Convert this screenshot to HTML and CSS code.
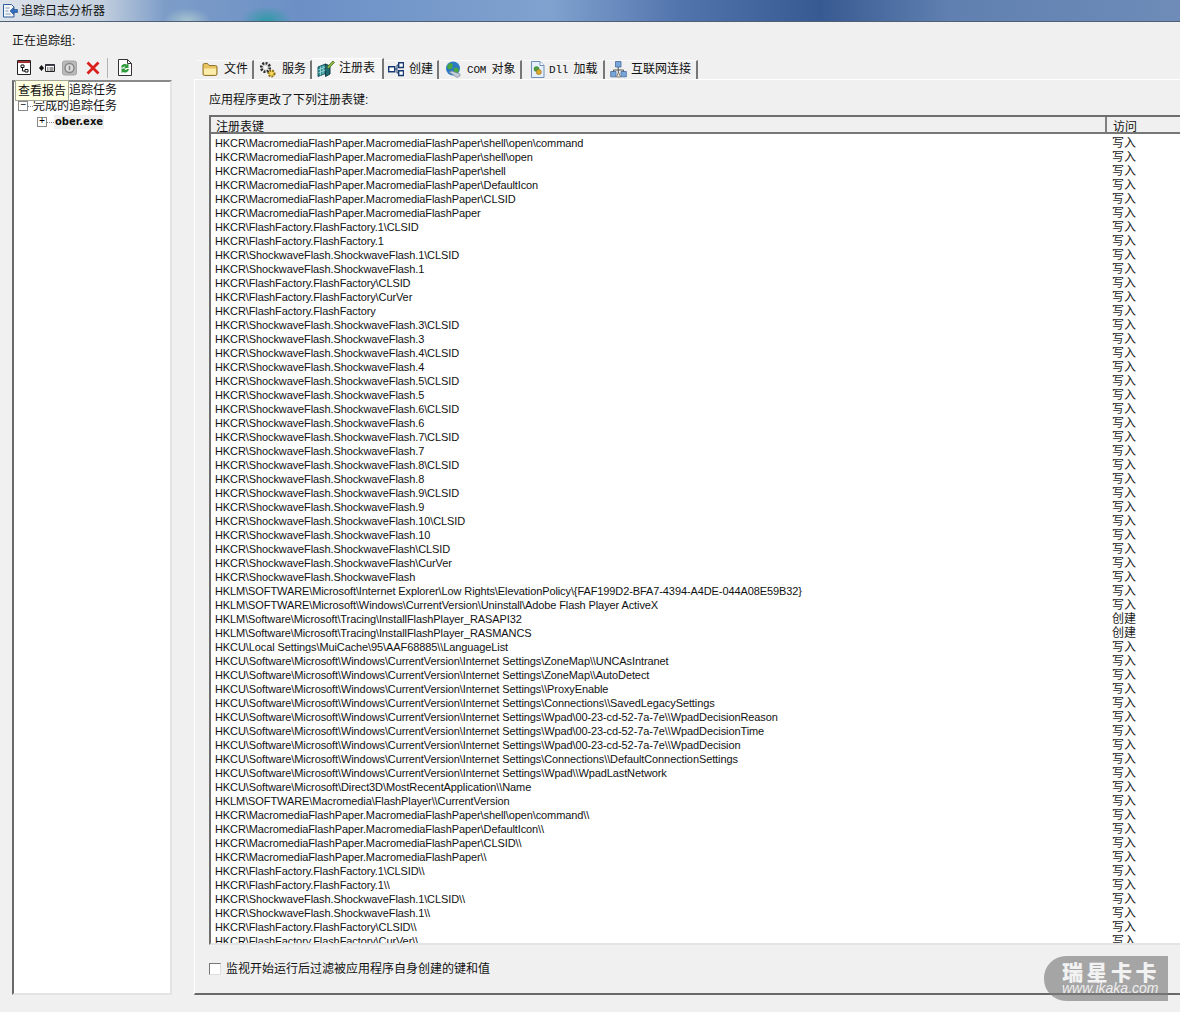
FILE: index.html
```html
<!DOCTYPE html>
<html lang="zh">
<head>
<meta charset="utf-8">
<title>追踪日志分析器</title>
<link rel="stylesheet" href="styles.css">
</head>
<body>
<header class="titlebar">
  <svg class="app-icon" width="17" height="17" viewBox="0 0 17 17"><path d="M1.500 2.500h8l2.500 2.500v10h-10.500z" fill="#f4f6fa" stroke="#2f5f9a"/><path d="M8 9l3.500-3.500v2h4v3h-4v2z" fill="#2f6fc0" stroke="#1c477f" stroke-width=".6"/><path d="M3.500 6h4M3.500 9h3M3.500 12h5" stroke="#7f9cb5"/></svg>
  <span>追踪日志分析器</span>
</header>
<main class="content">
  <div class="group-label">正在追踪组:</div>
  <div class="columns">
    <aside class="left">
      <div class="toolbar">
        <svg width="14" height="15" viewBox="0 0 14 15"><path d="M.5 .5h13v14H.5z" fill="#fff" stroke="#222"/><path d="M1 1h12v2H1z" fill="#a83232"/><path d="M4 5h3v2.500H4zM8 9.500h3V12H8zM5.500 7.500v3.500H8" fill="none" stroke="#111"/></svg>
        <svg class="gap-a" width="17" height="16" viewBox="0 0 17 16"><path d="M1 8l2.500-3L6 8l-2.500 3z" fill="#111"/><path d="M7.500 4.500h9v7h-9z" fill="#fff" stroke="#222"/><path d="M7.500 4.500h9v1.500h-9z" fill="#445"/><path d="M9 8h1.500M11.500 8h4M9 10h1.500M11.500 10h4" stroke="#333"/></svg>
        <svg class="gap-b" width="15" height="16" viewBox="0 0 15 16"><rect x=".5" y="1" width="14" height="14" rx="2" fill="#b9b9b9" stroke="#a6a6a6"/><circle cx="7.500" cy="8" r="4.500" fill="#dcdcdc" stroke="#858585" stroke-width="1.400"/><path d="M7.500 5.800v4.400" stroke="#858585" stroke-width="1.600"/></svg>
        <svg class="gap-c" width="14" height="14" viewBox="0 0 14 14"><path d="M1.500 1.500l11 11M12.500 1.500l-11 11" stroke="#d9201c" stroke-width="2.800"/></svg>
        <span class="tool-sep"></span>
        <svg width="14" height="17" viewBox="0 0 14 17"><path d="M.5 .5h9l4 4v12H.5z" fill="#fff" stroke="#333"/><path d="M9.500 .5v4h4" fill="none" stroke="#333"/><path d="M3 8.500a4 4 0 0 1 6-3l1.500-1v4.500H6l1.500-1.200a2 2 0 0 0-2.500 .7zM11 10a4 4 0 0 1-6 3l-1.500 1V9.500H8l-1.500 1.200a2 2 0 0 0 2.500-.7z" fill="#2f9a3a"/></svg>
      </div>
      <div class="tree">
        <div class="tree-row"><span class="expander">−</span><span class="dots"></span><span>进行的追踪任务</span></div>
        <div class="tree-row"><span class="expander">−</span><span class="dots"></span><span>完成的追踪任务</span></div>
        <div class="tree-row child"><span class="expander">+</span><span class="dots"></span><span class="selected">ober.exe</span></div>
        <div class="tooltip">查看报告</div>
      </div>
    </aside>
    <section class="right">
      <nav class="tabs">
        <div class="tab w-file"><svg width="16" height="16" viewBox="0 0 16 16"><path d="M1 4a1.500 1.500 0 0 1 1.500-1.500h3L7 4.500h6.500A1.500 1.500 0 0 1 15 6v7a1.500 1.500 0 0 1-1.500 1.500h-11A1.500 1.500 0 0 1 1 13z" fill="#e8c25e" stroke="#8f7630"/><path d="M2 7.500h12V13a.8 .8 0 0 1-.8 .8H2.800A.8 .8 0 0 1 2 13z" fill="#fbecaa"/></svg><span>文件</span></div>
        <div class="tab w-svc"><svg width="17" height="17" viewBox="0 0 17 17"><circle cx="6.500" cy="6.500" r="4.300" fill="#dcdcdc" stroke="#2c2c2c" stroke-width="2.600" stroke-dasharray="2 1.300"/><circle cx="6.500" cy="6.500" r="1.500" fill="#fff"/><circle cx="12.500" cy="12.500" r="3" fill="#f2d35c" stroke="#8b6d12" stroke-width="2" stroke-dasharray="1.800 1.100"/></svg><span>服务</span></div>
        <div class="tab active w-reg"><svg width="18" height="17" viewBox="0 0 18 17"><path d="M1 7l7.500-3v9.500L1 16.500z" fill="#2e8f94" stroke="#14545a"/><path d="M8.500 4l4.500 2v8l-4.500 2.500z" fill="#1d6a72" stroke="#123f45"/><path d="M3.500 6.500v9M6 5.500v9M1 10l7.500-3M1 13l7.500-3" stroke="#b5e4e4" stroke-width=".7"/><path d="M10 7l6-6 1.500 1.500-6 6z" fill="#8cbc3f" stroke="#3f5c10" stroke-width=".7"/></svg><span>注册表</span></div>
        <div class="tab w-new"><svg width="16" height="16" viewBox="0 0 16 16"><path d="M.7 5.700h6v5h-6zM10.700 1.700h4.800v4.800h-4.800zM10.700 9.700h4.800v4.800h-4.800z" fill="#fff" stroke="#183a72" stroke-width="1.400"/><path d="M7 8h2M9 4v8M9 4h1.500M9 12h1.500" stroke="#183a72"/></svg><span>创建</span></div>
        <div class="tab w-com"><svg width="17" height="17" viewBox="0 0 17 17"><circle cx="8" cy="7.500" r="7" fill="#2c7cc4"/><path d="M3.500 3c3-2 5 0 4 3S3 9 2 6zM9 7c3-1 5.500 0 4.500 3s-3 3-4.500 1z" fill="#4aa83c"/><path d="M4 11l3-1 8 3v2l-3 1.500z" fill="#c3ccd8" stroke="#6f7b8c" stroke-width=".6"/></svg><span><span class="mono">COM</span> 对象</span></div>
        <div class="tab w-dll"><svg width="15" height="17" viewBox="0 0 15 17"><path d="M1.500 .5h8.500l4 4v12H1.500z" fill="#e6f0fb" stroke="#6f8fb8"/><path d="M10 .5v4h4" fill="#fff" stroke="#6f8fb8"/><circle cx="6.500" cy="8" r="2.800" fill="#4d9a3e"/><circle cx="8.800" cy="11" r="2.600" fill="#d8a92e" stroke="#8a6a18" stroke-width=".5"/></svg><span><span class="mono">Dll</span> 加载</span></div>
        <div class="tab w-net"><svg width="17" height="17" viewBox="0 0 17 17"><path d="M5.500 .5h5.500v5.500H5.500zM.7 10.500h5.300v5.300H.7zM11 10.500h5.300v5.300H11z" fill="#79a7dc" stroke="#45699b" stroke-width=".8"/><path d="M8.250 6v5M3.500 10.500V9h10v1.500" stroke="#555" fill="none"/><path d="M6.500 16h4l-2-5z" fill="#efe9d8" stroke="#555" stroke-width=".7"/></svg><span>互联网连接</span></div>
      </nav>
      <div class="panel">
        <div class="panel-title">应用程序更改了下列注册表键:</div>
        <div class="list">
          <div class="list-head"><div class="head-key">注册表键</div><div class="head-access">访问</div></div>
          <div class="rows" id="rows">
            <div class="row"><span class="key">HKCR\MacromediaFlashPaper.MacromediaFlashPaper\shell\open\command</span><span class="acc">写入</span></div>
            <div class="row"><span class="key">HKCR\MacromediaFlashPaper.MacromediaFlashPaper\shell\open</span><span class="acc">写入</span></div>
            <div class="row"><span class="key">HKCR\MacromediaFlashPaper.MacromediaFlashPaper\shell</span><span class="acc">写入</span></div>
            <div class="row"><span class="key">HKCR\MacromediaFlashPaper.MacromediaFlashPaper\DefaultIcon</span><span class="acc">写入</span></div>
            <div class="row"><span class="key">HKCR\MacromediaFlashPaper.MacromediaFlashPaper\CLSID</span><span class="acc">写入</span></div>
            <div class="row"><span class="key">HKCR\MacromediaFlashPaper.MacromediaFlashPaper</span><span class="acc">写入</span></div>
            <div class="row"><span class="key">HKCR\FlashFactory.FlashFactory.1\CLSID</span><span class="acc">写入</span></div>
            <div class="row"><span class="key">HKCR\FlashFactory.FlashFactory.1</span><span class="acc">写入</span></div>
            <div class="row"><span class="key">HKCR\ShockwaveFlash.ShockwaveFlash.1\CLSID</span><span class="acc">写入</span></div>
            <div class="row"><span class="key">HKCR\ShockwaveFlash.ShockwaveFlash.1</span><span class="acc">写入</span></div>
            <div class="row"><span class="key">HKCR\FlashFactory.FlashFactory\CLSID</span><span class="acc">写入</span></div>
            <div class="row"><span class="key">HKCR\FlashFactory.FlashFactory\CurVer</span><span class="acc">写入</span></div>
            <div class="row"><span class="key">HKCR\FlashFactory.FlashFactory</span><span class="acc">写入</span></div>
            <div class="row"><span class="key">HKCR\ShockwaveFlash.ShockwaveFlash.3\CLSID</span><span class="acc">写入</span></div>
            <div class="row"><span class="key">HKCR\ShockwaveFlash.ShockwaveFlash.3</span><span class="acc">写入</span></div>
            <div class="row"><span class="key">HKCR\ShockwaveFlash.ShockwaveFlash.4\CLSID</span><span class="acc">写入</span></div>
            <div class="row"><span class="key">HKCR\ShockwaveFlash.ShockwaveFlash.4</span><span class="acc">写入</span></div>
            <div class="row"><span class="key">HKCR\ShockwaveFlash.ShockwaveFlash.5\CLSID</span><span class="acc">写入</span></div>
            <div class="row"><span class="key">HKCR\ShockwaveFlash.ShockwaveFlash.5</span><span class="acc">写入</span></div>
            <div class="row"><span class="key">HKCR\ShockwaveFlash.ShockwaveFlash.6\CLSID</span><span class="acc">写入</span></div>
            <div class="row"><span class="key">HKCR\ShockwaveFlash.ShockwaveFlash.6</span><span class="acc">写入</span></div>
            <div class="row"><span class="key">HKCR\ShockwaveFlash.ShockwaveFlash.7\CLSID</span><span class="acc">写入</span></div>
            <div class="row"><span class="key">HKCR\ShockwaveFlash.ShockwaveFlash.7</span><span class="acc">写入</span></div>
            <div class="row"><span class="key">HKCR\ShockwaveFlash.ShockwaveFlash.8\CLSID</span><span class="acc">写入</span></div>
            <div class="row"><span class="key">HKCR\ShockwaveFlash.ShockwaveFlash.8</span><span class="acc">写入</span></div>
            <div class="row"><span class="key">HKCR\ShockwaveFlash.ShockwaveFlash.9\CLSID</span><span class="acc">写入</span></div>
            <div class="row"><span class="key">HKCR\ShockwaveFlash.ShockwaveFlash.9</span><span class="acc">写入</span></div>
            <div class="row"><span class="key">HKCR\ShockwaveFlash.ShockwaveFlash.10\CLSID</span><span class="acc">写入</span></div>
            <div class="row"><span class="key">HKCR\ShockwaveFlash.ShockwaveFlash.10</span><span class="acc">写入</span></div>
            <div class="row"><span class="key">HKCR\ShockwaveFlash.ShockwaveFlash\CLSID</span><span class="acc">写入</span></div>
            <div class="row"><span class="key">HKCR\ShockwaveFlash.ShockwaveFlash\CurVer</span><span class="acc">写入</span></div>
            <div class="row"><span class="key">HKCR\ShockwaveFlash.ShockwaveFlash</span><span class="acc">写入</span></div>
            <div class="row"><span class="key">HKLM\SOFTWARE\Microsoft\Internet Explorer\Low Rights\ElevationPolicy\{FAF199D2-BFA7-4394-A4DE-044A08E59B32}</span><span class="acc">写入</span></div>
            <div class="row"><span class="key">HKLM\SOFTWARE\Microsoft\Windows\CurrentVersion\Uninstall\Adobe Flash Player ActiveX</span><span class="acc">写入</span></div>
            <div class="row"><span class="key">HKLM\Software\Microsoft\Tracing\InstallFlashPlayer_RASAPI32</span><span class="acc">创建</span></div>
            <div class="row"><span class="key">HKLM\Software\Microsoft\Tracing\InstallFlashPlayer_RASMANCS</span><span class="acc">创建</span></div>
            <div class="row"><span class="key">HKCU\Local Settings\MuiCache\95\AAF68885\\LanguageList</span><span class="acc">写入</span></div>
            <div class="row"><span class="key">HKCU\Software\Microsoft\Windows\CurrentVersion\Internet Settings\ZoneMap\\UNCAsIntranet</span><span class="acc">写入</span></div>
            <div class="row"><span class="key">HKCU\Software\Microsoft\Windows\CurrentVersion\Internet Settings\ZoneMap\\AutoDetect</span><span class="acc">写入</span></div>
            <div class="row"><span class="key">HKCU\Software\Microsoft\Windows\CurrentVersion\Internet Settings\\ProxyEnable</span><span class="acc">写入</span></div>
            <div class="row"><span class="key">HKCU\Software\Microsoft\Windows\CurrentVersion\Internet Settings\Connections\\SavedLegacySettings</span><span class="acc">写入</span></div>
            <div class="row"><span class="key">HKCU\Software\Microsoft\Windows\CurrentVersion\Internet Settings\Wpad\00-23-cd-52-7a-7e\\WpadDecisionReason</span><span class="acc">写入</span></div>
            <div class="row"><span class="key">HKCU\Software\Microsoft\Windows\CurrentVersion\Internet Settings\Wpad\00-23-cd-52-7a-7e\\WpadDecisionTime</span><span class="acc">写入</span></div>
            <div class="row"><span class="key">HKCU\Software\Microsoft\Windows\CurrentVersion\Internet Settings\Wpad\00-23-cd-52-7a-7e\\WpadDecision</span><span class="acc">写入</span></div>
            <div class="row"><span class="key">HKCU\Software\Microsoft\Windows\CurrentVersion\Internet Settings\Connections\\DefaultConnectionSettings</span><span class="acc">写入</span></div>
            <div class="row"><span class="key">HKCU\Software\Microsoft\Windows\CurrentVersion\Internet Settings\Wpad\\WpadLastNetwork</span><span class="acc">写入</span></div>
            <div class="row"><span class="key">HKCU\Software\Microsoft\Direct3D\MostRecentApplication\\Name</span><span class="acc">写入</span></div>
            <div class="row"><span class="key">HKLM\SOFTWARE\Macromedia\FlashPlayer\\CurrentVersion</span><span class="acc">写入</span></div>
            <div class="row"><span class="key">HKCR\MacromediaFlashPaper.MacromediaFlashPaper\shell\open\command\\</span><span class="acc">写入</span></div>
            <div class="row"><span class="key">HKCR\MacromediaFlashPaper.MacromediaFlashPaper\DefaultIcon\\</span><span class="acc">写入</span></div>
            <div class="row"><span class="key">HKCR\MacromediaFlashPaper.MacromediaFlashPaper\CLSID\\</span><span class="acc">写入</span></div>
            <div class="row"><span class="key">HKCR\MacromediaFlashPaper.MacromediaFlashPaper\\</span><span class="acc">写入</span></div>
            <div class="row"><span class="key">HKCR\FlashFactory.FlashFactory.1\CLSID\\</span><span class="acc">写入</span></div>
            <div class="row"><span class="key">HKCR\FlashFactory.FlashFactory.1\\</span><span class="acc">写入</span></div>
            <div class="row"><span class="key">HKCR\ShockwaveFlash.ShockwaveFlash.1\CLSID\\</span><span class="acc">写入</span></div>
            <div class="row"><span class="key">HKCR\ShockwaveFlash.ShockwaveFlash.1\\</span><span class="acc">写入</span></div>
            <div class="row"><span class="key">HKCR\FlashFactory.FlashFactory\CLSID\\</span><span class="acc">写入</span></div>
            <div class="row"><span class="key">HKCR\FlashFactory.FlashFactory\CurVer\\</span><span class="acc">写入</span></div>
          </div>
        </div>
        <label class="filter"><span class="checkbox"></span><span>监视开始运行后过滤被应用程序自身创建的键和值</span></label>
      </div>
    </section>
  </div>
</main>
<div class="watermark"><div class="wm-cn">瑞星卡卡</div><div class="wm-url">www.ikaka.com</div></div>
</body>
</html>
```
FILE: styles.css
```css
* { box-sizing: border-box; }
html, body { margin: 0; height: 1012px; overflow: hidden; }
body {
  position: relative;
  background: #f0f0f0;
  color: #111;
  font: 12px/14px "Liberation Sans", "Noto Sans CJK SC", sans-serif;
}
.titlebar {
  height: 22px;
  display: flex;
  align-items: center;
  gap: 2px;
  padding-left: 2px;
  font-size: 12px;
  color: #111;
  border-bottom: 1px solid #4f6075;
  background:
    radial-gradient(ellipse 24px 13px at 187px 21px, #a8c4cf, transparent),
    radial-gradient(ellipse 26px 15px at 267px 21px, #2f9aa6, transparent),
    linear-gradient(90deg, #dde3ea 0, #c4d0df 100px, #7d9dc8 165px, #6c90c6 300px, #80a2cf 550px, #5274ad 680px, #385a92 820px, #5f80b0 950px, #6f8cb8 1180px);
}
.content { padding: 12px 0 0 12px; }
.group-label { height: 24px; }
.columns { display: flex; gap: 22px; height: 937px; }
.left { width: 160px; flex: none; display: flex; flex-direction: column; }
.toolbar { height: 22px; display: flex; align-items: center; padding: 0 0 3px 5px; }
.gap-a { margin-left: 7px; }
.gap-b { margin-left: 7px; }
.gap-c { margin-left: 9px; }
.tool-sep { width: 1px; height: 20px; margin: 0 10px 0 7px; background: #b4b4b4; }
.tree {
  position: relative;
  height: 915px;
  background: #fff;
  border: 2px solid #e4e4e4;
  border-left-color: #696969;
  border-top-color: #8a8a8a;
}
.tree-row { height: 16px; display: flex; align-items: center; padding-left: 4px; }
.tree-row.child { padding-left: 23px; }
.expander {
  width: 10px; height: 10px;
  flex: none;
  border: 1px solid #888;
  background: #fff;
  font: 10px/8px "Liberation Mono", monospace;
  text-align: center;
  color: #000;
}
.dots { width: 5px; flex: none; border-top: 1px dotted #888; }
.child .dots { width: 7px; }
.selected {
  padding: 0 1px;
  background: #f0f0f0;
  font: bold 10px/14px "DejaVu Sans", sans-serif;
}
.tooltip {
  position: absolute;
  left: 1px; top: -2px;
  width: 54px;
  height: 21px;
  padding: 3px 0 0 2px;
  white-space: nowrap;
  background: #ffffe1;
  border: 1px solid #a5a595;
}
.right { flex: 1; min-width: 0; display: flex; flex-direction: column; }
.tabs { height: 21px; display: flex; align-items: flex-end; padding-left: 3px; }
.tab {
  height: 19px;
  display: flex;
  align-items: center;
  gap: 6px;
  padding: 0 0 2px 5px;
  background: #f0f0f0;
  border-top: 1px solid #fafafa;
  border-right: 2px solid #777;
  flex: none;
}
.tab.active { height: 21px; background: #f5f5f5; border-top-color: #fff; gap: 4px; }
.w-file { width: 57px; }
.w-svc { width: 58px; }
.w-reg { width: 72px; }
.w-new { width: 55px; padding-left: 4px; gap: 5px; }
.w-com { width: 83px; padding-left: 6px; gap: 5px; }
.w-dll { width: 83px; padding-left: 8px; gap: 4px; }
.w-net { width: 93px; gap: 4px; }
.mono { font: 11px/14px "Liberation Mono", monospace; letter-spacing: -.2px; margin-right: 2px; }
.panel {
  height: 916px;
  padding: 13px 0 0 14px;
  border-top: 1px solid #fff;
  border-left: 1px solid #fff;
  border-bottom: 2px solid #696969;
}
.panel-title { height: 22px; }
.list {
  height: 830px;
  display: flex;
  flex-direction: column;
  overflow: hidden;
  background: #fff;
  border: 2px solid #e4e4e4;
  border-left-color: #6e6e6e;
  border-top-color: #6e6e6e;
  border-right: 0;
}
.list-head {
  height: 17px;
  flex: none;
  display: flex;
  overflow: hidden;
  background: #f0f0f0;
  border-bottom: 2px solid #777;
  line-height: 20px;
}
.head-key { width: 896px; padding-left: 5px; border-right: 2px solid #808080; }
.head-access { padding-left: 6px; }
.rows { flex: 1; overflow: hidden; padding-top: 2px; }
.row { display: flex; height: 14px; line-height: 14px; white-space: nowrap; }
.key { width: 901px; flex: none; padding-left: 4px; font-size: 11px; letter-spacing: -.1px; }
.acc { color: #222; }
.filter { height: 49px; display: flex; align-items: center; gap: 5px; padding-bottom: 1px; }
.checkbox { width: 12px; height: 12px; background: #fff; border: 1px solid #777; border-right-color: #ddd; border-bottom-color: #ddd; }
.watermark {
  position: absolute;
  left: 1044px; top: 956px;
  width: 124px; height: 45px;
  padding: 6px 0 0 18px;
  color: #f2f2f2;
  background: rgba(125, 125, 125, .65);
  border-radius: 22px 0 0 22px;
}
.wm-cn { font: 900 21px/18px "Noto Sans CJK SC", sans-serif; letter-spacing: 3.500px; white-space: nowrap; }
.wm-url { font: italic 14px/16px "Liberation Sans", sans-serif; white-space: nowrap; color: #eee; }
```
